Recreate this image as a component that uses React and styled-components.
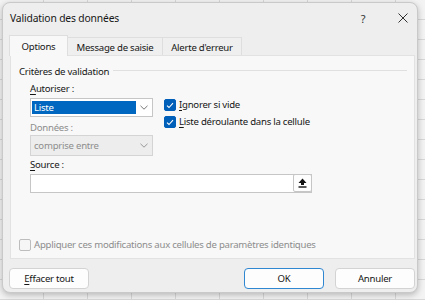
import React from "react";
import styled, { createGlobalStyle } from "styled-components";

const Global = createGlobalStyle`
  html, body {
    margin: 0;
    padding: 0;
    width: 425px;
    height: 300px;
    overflow: hidden;
    font-family: "Noto Sans", "Segoe UI", sans-serif;
    color: #161616;
  }
`;

// fond : la feuille excel floutée derrière la boite de dialogue
const Backdrop = styled.div`
  width: 425px;
  height: 300px;
  box-sizing: border-box;
  padding: 2px 0 0 2px;
  background-color: #f3f3f3;
  background-image: repeating-linear-gradient(
      90deg,
      transparent 0 43px,
      #d8d8d8 43px 44px
    ),
    repeating-linear-gradient(180deg, transparent 0 19px, #d8d8d8 19px 20px);
`;

const Dialog = styled.div`
  width: 416px;
  height: 291px;
  box-sizing: border-box;
  background: #eeeeee;
  border: 1px solid #c9c9c9;
  border-radius: 8px;
  box-shadow: 0 2px 6px rgba(0, 0, 0, 0.25);
  display: flex;
  flex-direction: column;
  font-size: 9.6px;
  letter-spacing: -0.25px;
`;

const TitleBar = styled.div`
  height: 31px;
  display: flex;
  align-items: center;
  padding: 0 0 1px 7px;
  box-sizing: border-box;
  font-size: 10.3px;
  letter-spacing: -0.15px;
`;

const Title = styled.div`
  flex: 1;
`;

const TitleBtn = styled.div`
  width: 20px;
  height: 20px;
  display: flex;
  align-items: center;
  justify-content: center;
  font-size: 11px;
  color: #333;
  margin-right: ${(p) => p.mr}px;
`;

const Tabs = styled.div`
  display: flex;
  align-items: flex-end;
  margin: 0 0 0 6px;
  height: 21px;
`;

const Tab = styled.div`
  box-sizing: border-box;
  width: ${(p) => p.w}px;
  height: ${(p) => (p.active ? 21 : 18)}px;
  display: flex;
  align-items: center;
  justify-content: center;
  background: ${(p) => (p.active ? "#f8f8f8" : "#efefef")};
  border: 1px solid #dedede;
  border-bottom: none;
  ${(p) => (p.active ? "" : "border-left: none;")}
  margin-bottom: ${(p) => (p.active ? -1 : 0)}px;
  padding-top: ${(p) => (p.active ? 0 : 1)}px;
  position: relative;
  z-index: ${(p) => (p.active ? 1 : 0)};
`;

const Panel = styled.div`
  margin: 0 2px 0 7px;
  height: 204px;
  box-sizing: border-box;
  background: #f8f8f8;
  border: 1px solid #e2e2e2;
  padding: 9px 7px 7px 8px;
  display: flex;
  flex-direction: column;
`;

const GroupHead = styled.div`
  height: 14px;
  line-height: 14px;
  display: flex;
  align-items: center;
  gap: 4px;
  &::after {
    content: "";
    flex: 1;
    height: 1px;
    background: #e0e0e0;
    margin-top: -3px;
  }
`;

const Group = styled.div`
  padding-left: 11px;
  display: flex;
  flex-direction: column;
`;

const Label = styled.div`
  height: 14px;
  line-height: 14px;
  margin-top: ${(p) => p.mt || 0}px;
  color: ${(p) => (p.disabled ? "#8d8d8d" : "#161616")};
`;

const U = styled.span`
  text-decoration: underline;
  text-underline-offset: 1.5px;
`;

const Row = styled.div`
  display: flex;
  gap: 11px;
`;

const Col = styled.div`
  display: flex;
  flex-direction: column;
  width: ${(p) => p.w}px;
`;

const Select = styled.div`
  box-sizing: border-box;
  width: 123px;
  height: ${(p) => p.h}px;
  margin-top: ${(p) => p.mt || 0}px;
  display: flex;
  align-items: center;
  background: ${(p) => (p.disabled ? "#ededed" : "#ffffff")};
  border: 1px solid ${(p) => (p.disabled ? "#d4d4d4" : "#c6c6c6")};
  padding: 2px 0 2px 1px;
`;

const SelectValue = styled.div`
  flex: 1;
  align-self: stretch;
  display: flex;
  align-items: center;
  padding-left: 2px;
  background: ${(p) => (p.selected ? "#0067c0" : "transparent")};
  color: ${(p) => (p.selected ? "#fff" : p.disabled ? "#8d8d8d" : "#161616")};
`;

const Arrow = styled.div`
  width: 16px;
  align-self: stretch;
  display: flex;
  align-items: center;
  justify-content: center;
`;

const Checks = styled.div`
  display: flex;
  flex-direction: column;
  gap: 5px;
  padding-top: 20px;
`;

const CheckRow = styled.div`
  height: 12px;
  line-height: 12px;
  display: flex;
  align-items: center;
  gap: 3px;
  color: ${(p) => (p.disabled ? "#8d8d8d" : "#161616")};
`;

const Box = styled.div`
  box-sizing: border-box;
  width: 12px;
  height: 12px;
  border-radius: 2px;
  display: flex;
  align-items: center;
  justify-content: center;
  background: ${(p) => (p.checked ? "#005fb8" : "#f6f6f6")};
  border: 1px solid ${(p) => (p.checked ? "#005fb8" : "#bdbdbd")};
`;

const SourceField = styled.div`
  box-sizing: border-box;
  margin-top: 2px;
  width: 282px;
  height: 19px;
  background: #fff;
  border: 1px solid #c6c6c6;
  display: flex;
  justify-content: flex-end;
`;

const PickBtn = styled.div`
  box-sizing: border-box;
  width: 19px;
  height: 18px;
  margin-top: -1px;
  margin-right: -1px;
  border: 1px solid #c6c6c6;
  border-radius: 2px;
  background: #fdfdfd;
  display: flex;
  align-items: center;
  justify-content: center;
`;

const Spacer = styled.div`
  flex: 1;
`;

const Footer = styled.div`
  display: flex;
  align-items: center;
  gap: 11px;
  padding: 9px 2px 0 6px;
`;

const Button = styled.div`
  box-sizing: border-box;
  width: 80px;
  height: 21px;
  display: flex;
  align-items: center;
  justify-content: center;
  background: #fdfdfd;
  border: 1px solid ${(p) => (p.primary ? "#2f86d1" : "#d3d3d3")};
  border-radius: 4px;
  margin-left: ${(p) => p.ml || 0}px;
`;

const Chevron = ({ color = "#6b6b6b" }) => (
  <svg width="8" height="5" viewBox="0 0 8 5">
    <path d="M0.5 0.8 L4 4.2 L7.5 0.8" fill="none" stroke={color} strokeWidth="0.9" />
  </svg>
);

const Check = () => (
  <svg width="8" height="7" viewBox="0 0 8 7">
    <path d="M1 3.6 L3 5.5 L7 1.2" fill="none" stroke="#fff" strokeWidth="1.1" />
  </svg>
);

const CloseIcon = () => (
  <svg width="10" height="10" viewBox="0 0 10 10">
    <path d="M0.5 0.5 L9.5 9.5 M9.5 0.5 L0.5 9.5" stroke="#333" strokeWidth="1" />
  </svg>
);

const UploadIcon = () => (
  <svg width="9" height="10" viewBox="0 0 9 10">
    <path d="M4.5 0.5 L8.5 5 L6 5 L6 7 L3 7 L3 5 L0.5 5 Z" fill="#111" />
    <rect x="0.5" y="8.3" width="8" height="1.4" fill="#111" />
  </svg>
);

export default function App() {
  return (
    <>
      <Global />
      <Backdrop>
        <Dialog>
          <TitleBar>
            <Title>Validation des données</Title>
            <TitleBtn mr={20}>?</TitleBtn>
            <TitleBtn mr={4}>
              <CloseIcon />
            </TitleBtn>
          </TitleBar>

          <Tabs>
            <Tab active w={59}>Options</Tab>
            <Tab w={95}>Message de saisie</Tab>
            <Tab w={79}>Alerte d'erreur</Tab>
          </Tabs>

          <Panel>
            <GroupHead>Critères de validation</GroupHead>
            <Group>
              <Row>
                <Col w={123}>
                  <Label mt={3}>
                    <U>A</U>utoriser :
                  </Label>
                  <Select h={19} mt={2}>
                    <SelectValue selected>Liste</SelectValue>
                    <Arrow>
                      <Chevron />
                    </Arrow>
                  </Select>
                  <Label mt={4} disabled>
                    Données :
                  </Label>
                  <Select h={21} disabled>
                    <SelectValue disabled>comprise entre</SelectValue>
                    <Arrow>
                      <Chevron color="#8d8d8d" />
                    </Arrow>
                  </Select>
                </Col>
                <Checks>
                  <CheckRow>
                    <Box checked>
                      <Check />
                    </Box>
                    <span>
                      <U>I</U>gnorer si vide
                    </span>
                  </CheckRow>
                  <CheckRow>
                    <Box checked>
                      <Check />
                    </Box>
                    <span>
                      <U>L</U>iste déroulante dans la cellule
                    </span>
                  </CheckRow>
                </Checks>
              </Row>
              <Label mt={2}>
                <U>S</U>ource :
              </Label>
              <SourceField>
                <PickBtn>
                  <UploadIcon />
                </PickBtn>
              </SourceField>
            </Group>
            <Spacer />
            <CheckRow disabled>
              <Box />
              <span>Appliquer ces modifications aux cellules de paramètres identiques</span>
            </CheckRow>
          </Panel>

          <Footer>
            <Button>
              <span>
                <U>E</U>ffacer tout
              </span>
            </Button>
            <Button primary ml={144}>
              OK
            </Button>
            <Button>Annuler</Button>
          </Footer>
        </Dialog>
      </Backdrop>
    </>
  );
}
